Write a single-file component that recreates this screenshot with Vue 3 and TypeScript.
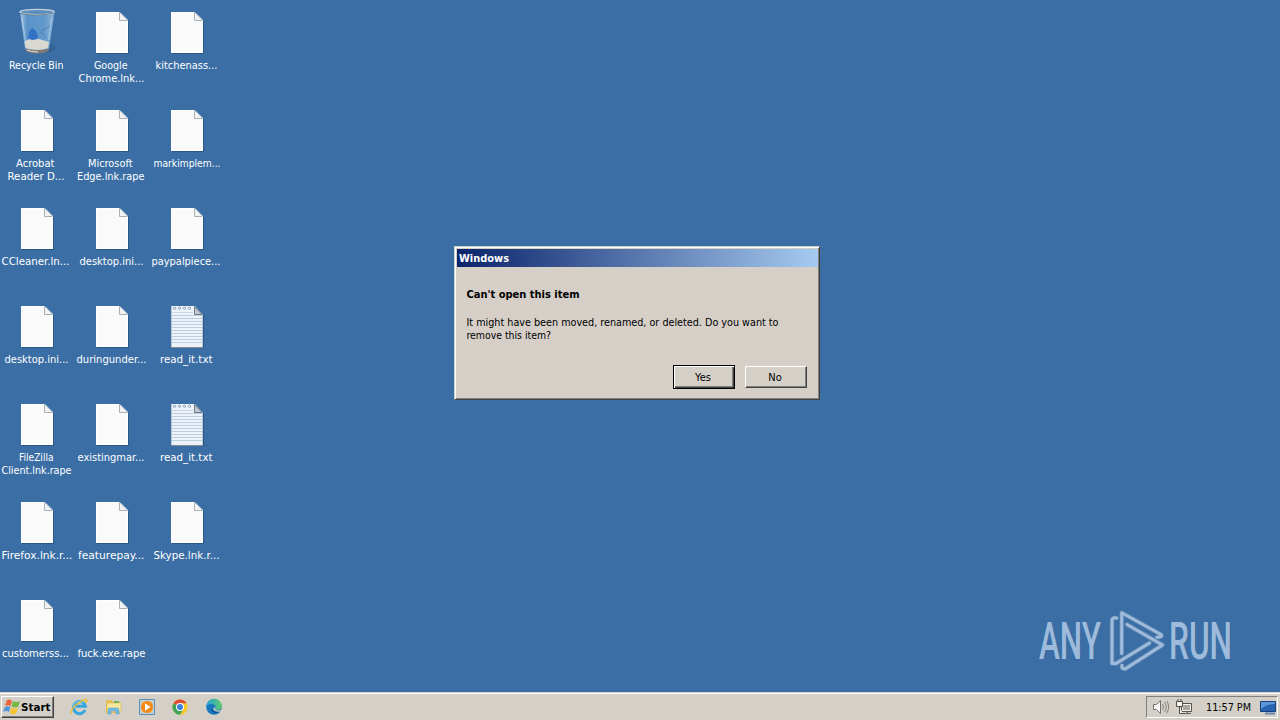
<script setup lang="ts">
type Line = [text: string, x: number, width: number]
interface Item {
  kind: 'bin' | 'file' | 'note'
  lines: Line[]
}

const file = (...lines: Line[]): Item => ({ kind: 'file', lines })

// Columns run top to bottom; label x values are relative to the column's cell.
const columns: Item[][] = [
  [
    { kind: 'bin', lines: [['Recycle Bin', 9, 54.5]] },
    file(['Acrobat', 16, 38.5], ['Reader D...', 7.5, 57]),
    file(['CCleaner.ln...', 1.5, 68]),
    file(['desktop.ini...', 4.5, 64]),
    file(['FileZilla', 19, 34.5], ['Client.lnk.rape', 1.5, 70]),
    file(['Firefox.lnk.r...', 1.5, 71]),
    file(['customerss...', 2, 67]),
  ],
  [
    file(['Google', 19, 33.5], ['Chrome.lnk...', 3.5, 66]),
    file(['Microsoft', 13, 44.5], ['Edge.lnk.rape', 2, 67.5]),
    file(['desktop.ini...', 4.5, 64]),
    file(['duringunder...', 1.5, 70]),
    file(['existingmar...', 2.5, 67]),
    file(['featurepay...', 3, 66.5]),
    file(['fuck.exe.rape', 2.5, 68]),
  ],
  [
    file(['kitchenass...', 5.5, 62]),
    file(['markimplem...', 3.5, 67]),
    file(['paypalpiece...', 1.5, 69]),
    { kind: 'note', lines: [['read_it.txt', 10, 52.5]] },
    { kind: 'note', lines: [['read_it.txt', 10, 52.5]] },
    file(['Skype.lnk.r...', 3.5, 66]),
  ],
]

const ruled = Array.from({ length: 10 }, (_, i) => 11.5 + i * 3)
</script>

<template>
  <div class="screen">
    <main class="desktop">
      <div v-for="(column, c) in columns" :key="c" class="column">
        <div v-for="(item, r) in column" :key="r" class="item">
          <svg v-if="item.kind === 'bin'" class="icon" width="75" height="48" viewBox="0 0 75 48">
            <defs>
              <linearGradient id="glass" x1="0" x2="1">
                <stop offset="0" stop-color="#a9c9e2" />
                <stop offset=".2" stop-color="#5b93c9" />
                <stop offset=".7" stop-color="#6299cc" />
                <stop offset="1" stop-color="#8db5d6" />
              </linearGradient>
            </defs>
            <ellipse cx="46" cy="42" rx="9" ry="4.5" fill="#2d5b8d" opacity=".6" />
            <path d="M20 5.5 25 43Q26 46 37 46T49 43L54.5 5.5Z" fill="url(#glass)" />
            <path d="M28 32l1-6 3-4 4 3 2 6-4 4z" fill="#2a6bc6" opacity=".85" />
            <path d="m41 25 9-5M41 26l5 6" stroke="#41719e" fill="none" opacity=".7" />
            <path d="M24.5 36Q28 32 32 34L39 33 49 36 48 42Q43 44 37 44T25.5 42Z" fill="#d9d8d0" />
            <path d="M25 42Q28 44 37 44T49 42L48 45Q45 47.5 37 47.5T26 45Z" fill="#817b75" />
            <path d="M27 44Q31 46 38 46" stroke="#e8e5df" fill="none" />
            <ellipse cx="37" cy="6" rx="17.2" ry="2.6" fill="#5a8fbd" stroke="#c3d3de" stroke-width="1.3" />
            <path d="M20 7.5Q37 11 54 7" stroke="#647f93" fill="none" />
            <path d="M22 12 26 37M51.5 12 48.5 34" stroke="#cee2ef" opacity=".5" fill="none" />
          </svg>
          <svg v-else class="icon" width="75" height="48" viewBox="0 0 75 48">
            <path d="M22 48V47H53V14.5L54 15.5V48Z" fill="#234c73" opacity=".65" />
            <template v-if="item.kind === 'file'">
              <path d="M21 6H44L53 15V47H21Z" fill="#fafafa" />
              <path d="M21.5 6.5H44L52.5 15V46.5H21.5Z" fill="none" stroke="#fff" />
              <path d="M44.5 6.5V14.5H52" fill="#f2f2f2" stroke="#a8b0b5" />
              <path d="M45 6.5 52.5 14" stroke="#c8d2d9" />
            </template>
            <template v-else>
              <path d="M21 6H45L53 15V47H21Z" fill="#edf3f9" />
              <path d="M21 47.5H53" stroke="#87898e" />
              <path v-for="y in ruled" :key="y" :d="`M22 ${y + 4}H52`" stroke="#bccddf" />
              <path d="M22 12.5H43" stroke="#c9d7e6" />
              <g fill="#fff" stroke="#6688ab" stroke-width=".8">
                <circle v-for="n in 4" :key="n" :cx="19.5 + n * 5" cy="8.3" r="1.1" />
              </g>
              <path d="M44.5 6.5V14.5H52Z" fill="#c3c9d1" stroke="#687886" />
              <path d="M21.5 6V47M52.5 15V47" stroke="#b8c5d4" />
            </template>
          </svg>
          <svg class="label" width="75" height="32">
            <text
              v-for="([text, x, width], n) in item.lines"
              :key="n"
              :x="x"
              :y="15 + n * 13"
              :textLength="width"
              lengthAdjust="spacingAndGlyphs"
            >{{ text }}</text>
          </svg>
        </div>
      </div>
    </main>

    <svg class="watermark" width="210" height="76" viewBox="1035 600 210 76">
      <g class="brand">
        <text x="1039" y="659" textLength="62" lengthAdjust="spacingAndGlyphs">ANY</text>
        <text x="1169" y="659" textLength="63" lengthAdjust="spacingAndGlyphs">RUN</text>
      </g>
      <g fill="none" stroke-linejoin="round" stroke-linecap="round">
        <g stroke="#5f86b1" stroke-width="4.6">
          <path d="M1121.7 653.5V612.8L1161 634.5Q1163 637 1157 637.3" />
          <path d="M1116.5 618Q1112 617 1112 621V663.5L1116 663.5 1149.5 643" />
          <path d="M1127 624.5 1162.5 645 1125 669Q1121 669 1122 665.5" />
        </g>
        <g stroke="#9ebbdc" stroke-width="3">
          <path d="M1121.7 653.5V612.8L1161 634.5Q1163 637 1157 637.3" />
          <path d="M1116.5 618Q1112 617 1112 621V663.5L1116 663.5 1149.5 643" />
          <path d="M1127 624.5 1162.5 645 1125 669Q1121 669 1122 665.5" />
        </g>
      </g>
    </svg>

    <section class="dialog">
      <header class="title">
        <svg width="200" height="18"><text x="2" y="13" textLength="50" lengthAdjust="spacingAndGlyphs">Windows</text></svg>
      </header>
      <svg class="message" width="340" height="60">
        <text class="bold" x="8.5" y="13" textLength="113" lengthAdjust="spacingAndGlyphs">Can't open this item</text>
        <text x="8.5" y="41" textLength="312" lengthAdjust="spacingAndGlyphs">It might have been moved, renamed, or deleted. Do you want to</text>
        <text x="8.5" y="54" textLength="84.5" lengthAdjust="spacingAndGlyphs">remove this item?</text>
      </svg>
      <div class="actions">
        <button class="primary"><span>Yes</span></button>
        <button><span>No</span></button>
      </div>
    </section>

    <footer class="taskbar">
      <button class="start">
        <svg width="18" height="18" viewBox="0 0 18 18">
          <path d="M4 2Q7 .5 9 3L7.5 8Q5 6.5 2 8Z" fill="#ed6438" />
          <path d="M10 3Q13 5 17 3L15 9Q12 10 8.5 8.5Z" fill="#79b943" />
          <path d="M2 9Q5 7.5 7.3 9L6 14Q3 12 0 14Z" fill="#4f97d7" />
          <path d="M8.3 9.5Q11 11.5 15 10L13 15.5Q10 17 6.8 15Z" fill="#f7c52d" />
        </svg>
        <svg width="31" height="18"><text class="bold" x="0" y="12.5" textLength="29.5" lengthAdjust="spacingAndGlyphs">Start</text></svg>
      </button>
      <nav class="launch">
        <svg width="18" height="18" viewBox="0 0 18 18">
          <path d="M15 12A6 6 0 1 1 15.3 8.2H5.3" fill="none" stroke="#36a5df" stroke-width="3" />
          <path d="M3 9A6 5.6 0 0 1 13 5" fill="none" stroke="#83d2f1" />
          <path d="M2 16Q-1 14 5 8T16 1.5Q18 2 15.5 5" fill="none" stroke="#edbd35" stroke-width="1.4" />
        </svg>
        <svg width="18" height="18" viewBox="0 0 18 18">
          <path d="M2 3Q2 2 3 2H8L9 4H16V15H2Z" fill="#e6bf55" />
          <path d="M3 5H17V14H3Z" fill="#f9e7a0" stroke="#d8ae48" stroke-width=".6" />
          <path d="M10 3H15V5H10Z" fill="#75b35f" />
          <path d="M4 16V12Q4 10 6 10H13Q15 10 15 12V16H12V13H7V16Z" fill="#76bce3" stroke="#4b91bf" stroke-width=".5" />
        </svg>
        <svg width="18" height="18" viewBox="0 0 18 18">
          <path d="M1.5 1.5H16.5V16.5H1.5Z" fill="#b4cfe6" stroke="#668fae" />
          <path d="M3.5 3.5H14.5V14.5H3.5Z" fill="#f6c27a" />
          <circle cx="9" cy="9" r="6" fill="#f18817" />
          <path d="M7 5.3 12.5 9 7 12.7Z" fill="#fff" />
        </svg>
        <svg width="18" height="18" viewBox="0 0 18 18">
          <circle cx="9" cy="9" r="7.7" fill="#f7c82a" />
          <path d="M9 9 2.4 5.2A7.7 7.7 0 0 1 15.7 5.2H9Z" fill="#df4a3c" />
          <path d="M9 9 2.4 5.2A7.7 7.7 0 0 0 9 16.7L12.3 11Z" fill="#3fa457" />
          <circle cx="9" cy="9" r="4" fill="#fff" />
          <circle cx="9" cy="9" r="3" fill="#3c80dc" />
        </svg>
        <svg width="18" height="18" viewBox="0 0 18 18">
          <defs>
            <linearGradient id="wave"><stop stop-color="#279edb" /><stop offset="1" stop-color="#5fce68" /></linearGradient>
          </defs>
          <circle cx="9" cy="9" r="7.8" fill="#1878bd" />
          <path d="M1.2 8A7.8 7.8 0 0 1 16.8 9Q16.4 12 12 12 9.5 11.5 11 9.5 10 5.5 6 6 2 6 1.2 10Z" fill="url(#wave)" />
          <path d="M7.5 8Q5 14 13 13.5L16.3 12Q13 16 9.5 15 4.5 13 7.5 8Z" fill="#124f92" />
          <path d="M10.8 9.3Q9 12 12.5 12.5 15.5 12.8 17 11.5L17.5 13 14 13.8Q8 13.5 8.5 10Z" fill="#d4d0c8" />
        </svg>
      </nav>
      <aside class="tray">
        <svg width="18" height="18" viewBox="0 0 18 18">
          <path d="M1.5 6.5H4.5L8.5 2.5V15.5L4.5 11.5H1.5Z" fill="#f8f8f6" stroke="#74716d" />
          <path d="M10.5 6Q12.5 9 10.5 12M12.5 4Q16 9 12.5 14M14.6 2.7Q18.8 9 14.6 15.3" fill="none" stroke="#85827e" />
        </svg>
        <svg width="18" height="18" viewBox="0 0 18 18">
          <path d="M5.5 5.5H15.5V13.5H5.5Z" fill="#aaa7a1" stroke="#56534f" />
          <path d="M6.5 6.5H14.5V12.5H6.5Z" fill="none" stroke="#f4f3ef" />
          <path d="M7 15.5H15M11.5 14V16" stroke="#625f5b" />
          <path d="M.5 3.5H6.5V8.5H.5ZM2 1V3M5 1V3M3.5 9V15.5H7" fill="#f5f4f0" stroke="#514e4b" />
        </svg>
        <svg class="clock" width="48" height="18"><text x="0" y="13" textLength="45" lengthAdjust="spacingAndGlyphs">11:57 PM</text></svg>
        <svg width="18" height="18" viewBox="0 0 18 18">
          <path d="M.5 3.5H15.5V13.5H.5Z" fill="#2762b3" stroke="#183f79" />
          <path d="M1 4H15V6Q7 6 1 11Z" fill="#5b96d5" />
          <path d="M5 15.5H15" stroke="#6787ad" stroke-width="2" />
        </svg>
      </aside>
    </footer>
  </div>
</template>

<style>
html, body { margin: 0; overflow: hidden; }
</style>

<style scoped>
* { box-sizing: border-box; }
.screen {
  position: relative;
  display: flex;
  flex-direction: column;
  width: 1280px;
  height: 720px;
  background: #3a6ea5;
  font-family: "DejaVu Sans Condensed", "DejaVu Sans", sans-serif;
  font-size: 11px;
  color: #000;
}
svg { display: block; flex: none; }
text { fill: currentColor; }
.desktop { display: flex; flex: 1; padding-top: 6px; }
.column { width: 75px; }
.item { height: 98px; }
.label { color: #fff; }
.watermark { position: absolute; left: 1035px; top: 600px; overflow: visible; }
.brand text {
  font: 500 51px Roboto, sans-serif;
  fill: #9ebbdc;
}
.dialog {
  position: absolute;
  left: 454px;
  top: 246px;
  display: flex;
  flex-direction: column;
  width: 366px;
  height: 154px;
  padding: 1px;
  border: 1px solid;
  border-color: #d4d0c8 #404040 #404040 #d4d0c8;
  background: #d6cfc8;
  box-shadow: inset 1px 1px #fff, inset -1px -1px #808080;
}
.title {
  height: 18px;
  margin: 1px 0 0 1px;
  width: 361px;
  background: linear-gradient(90deg, #0a246a, #a6caf0);
  color: #fff;
  font-weight: bold;
}
.bold { font-weight: bold; }
.message { margin: 18px 0 0 2px; }
.actions {
  display: flex;
  align-items: center;
  justify-content: flex-end;
  gap: 10px;
  margin-top: 20px;
  padding-right: 11px;
}
button {
  display: flex;
  align-items: center;
  justify-content: center;
  width: 62px;
  height: 22px;
  padding: 0 2px 0 0;
  border: 1px solid;
  border-color: #fff #404040 #404040 #fff;
  background: #d4d0c8;
  box-shadow: inset -1px -1px #808080;
  color: #000;
  font: inherit;
}
.primary {
  height: 24px;
  border-color: #000;
  box-shadow: inset 1px 1px #fff, inset -1px -1px #404040, inset -2px -2px #808080;
}
.taskbar {
  display: flex;
  align-items: center;
  height: 29px;
  padding: 2px 2px 1px 1px;
  border-top: 1px solid #d4d0c8;
  background: #d4d0c8;
  box-shadow: inset 0 1px #fff;
}
.start {
  justify-content: flex-start;
  gap: 0;
  width: 53px;
  padding: 0 0 0 1px;
}
.launch { display: flex; gap: 15.8px; margin-left: 16px; }
.tray {
  display: flex;
  align-items: center;
  width: 132px;
  height: 22px;
  margin-left: auto;
  padding-left: 5px;
  gap: 6px;
  border: 1px solid;
  border-color: #808080 #fff #fff #808080;
}
.clock { margin: 0 0 0 6px; }
</style>
